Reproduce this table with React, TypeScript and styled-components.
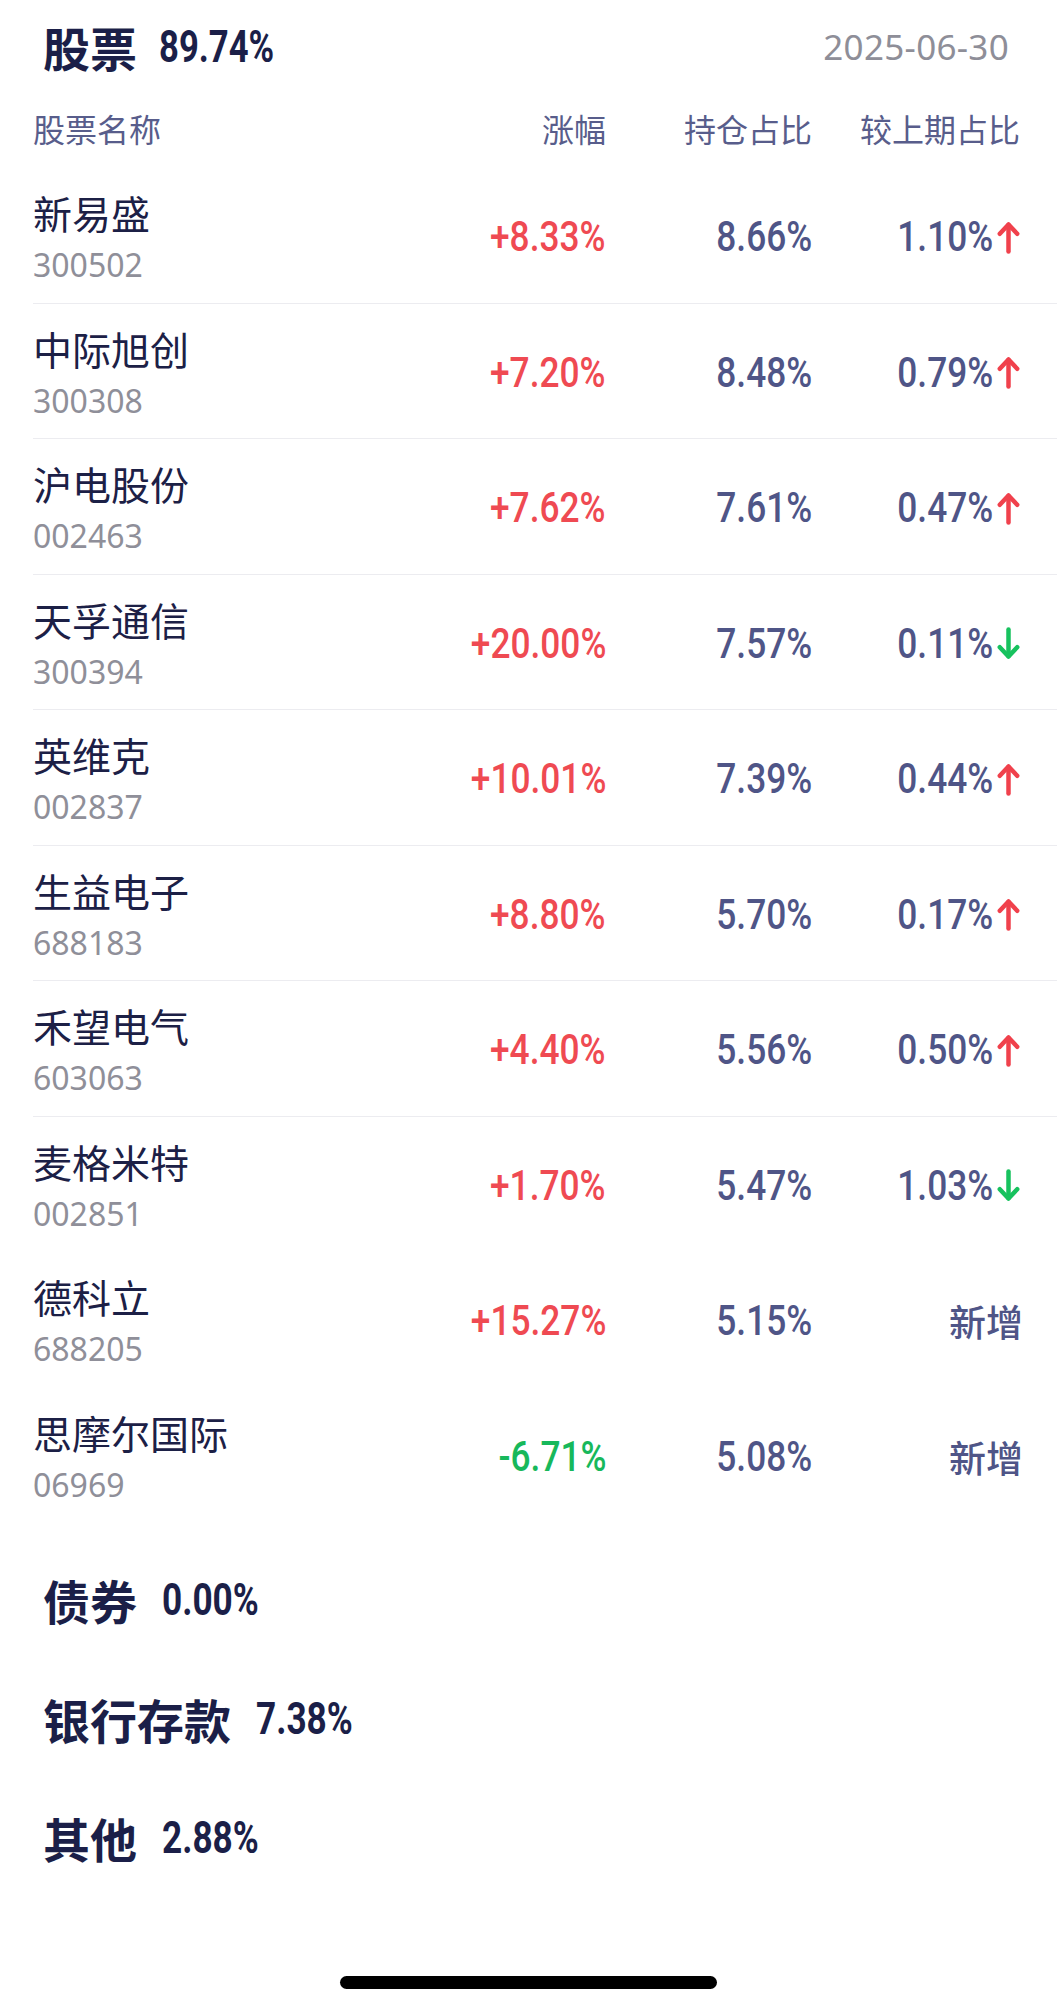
import React from "react";
import styled, { createGlobalStyle } from "styled-components";

type Trend = "up" | "down";

interface Holding {
  name: string;
  code: string;
  change: string;
  ratio: string;
  prev?: string;
  trend?: Trend;
  line?: boolean;
}

const holdings: Holding[] = [
  { name: "新易盛", code: "300502", change: "+8.33%", ratio: "8.66%", prev: "1.10%", trend: "up", line: true },
  { name: "中际旭创", code: "300308", change: "+7.20%", ratio: "8.48%", prev: "0.79%", trend: "up", line: true },
  { name: "沪电股份", code: "002463", change: "+7.62%", ratio: "7.61%", prev: "0.47%", trend: "up", line: true },
  { name: "天孚通信", code: "300394", change: "+20.00%", ratio: "7.57%", prev: "0.11%", trend: "down", line: true },
  { name: "英维克", code: "002837", change: "+10.01%", ratio: "7.39%", prev: "0.44%", trend: "up", line: true },
  { name: "生益电子", code: "688183", change: "+8.80%", ratio: "5.70%", prev: "0.17%", trend: "up", line: true },
  { name: "禾望电气", code: "603063", change: "+4.40%", ratio: "5.56%", prev: "0.50%", trend: "up", line: true },
  { name: "麦格米特", code: "002851", change: "+1.70%", ratio: "5.47%", prev: "1.03%", trend: "down" },
  { name: "德科立", code: "688205", change: "+15.27%", ratio: "5.15%" },
  { name: "思摩尔国际", code: "06969", change: "-6.71%", ratio: "5.08%" },
];

const others = [
  { label: "债券", value: "0.00%" },
  { label: "银行存款", value: "7.38%" },
  { label: "其他", value: "2.88%" },
];

const GlobalStyle = createGlobalStyle`
  html, body {
    margin: 0;
    padding: 0;
    background: #ffffff;
  }
  body {
    font-family: "Noto Sans CJK SC", "Noto Sans", sans-serif;
    -webkit-font-smoothing: antialiased;
  }
`;

const Page = styled.div`
  width: 1057px;
  min-height: 2011px;
  background: #fff;
  display: flex;
  flex-direction: column;
`;

const TitleBar = styled.div`
  height: 92px;
  display: flex;
  align-items: center;
  justify-content: space-between;
  padding: 0 48px 0 43px;
`;

const TitleGroup = styled.div<{ $gap?: number }>`
  display: flex;
  align-items: center;
  gap: ${(p) => p.$gap ?? 22}px;
`;

const BigLabel = styled.span`
  font-family: "Noto Sans CJK SC", sans-serif;
  font-size: 47px;
  font-weight: 700;
  color: #1b1f48;
  line-height: 1;
`;

// condensed look of the original digit face
const BigValue = styled.span<{ $size?: number; $squeeze?: number }>`
  display: inline-block;
  font-family: "Roboto", "Noto Sans", sans-serif;
  font-size: ${(p) => p.$size ?? 44}px;
  font-weight: 700;
  color: #1b1f48;
  line-height: 1;
  transform: scaleX(${(p) => p.$squeeze ?? 0.77});
  transform-origin: left center;
`;

const DateText = styled.span`
  font-family: "Noto Sans", "Roboto", sans-serif;
  font-size: 35px;
  color: #8e8e98;
  letter-spacing: 0.3px;
`;

const Columns = styled.div`
  display: grid;
  grid-template-columns: 1fr 200px 206px 208px;
  align-items: center;
`;

const HeadRow = styled(Columns)`
  height: 76px;
  box-sizing: border-box;
  padding: 0 37px 4px 33px;
`;

const HeadCell = styled.span<{ $right?: boolean }>`
  font-family: "Noto Sans CJK SC", sans-serif;
  font-size: 32px;
  color: #585d8b;
  text-align: ${(p) => (p.$right ? "right" : "left")};
`;

const List = styled.div`
  padding-left: 43px;
`;

const Row = styled(Columns)<{ $line?: boolean }>`
  height: 135.5px;
  box-sizing: border-box;
  margin-left: -10px;
  padding-right: 37px;
  border-bottom: 1px solid ${(p) => (p.$line ? "#ececf0" : "transparent")};
`;

const NameCell = styled.div`
  display: flex;
  flex-direction: column;
  padding-top: 3px;
`;

const Name = styled.span`
  font-family: "Noto Sans CJK SC", sans-serif;
  font-size: 39px;
  line-height: 50px;
  color: #1c2046;
`;

const Code = styled.span`
  font-family: "Noto Sans", "Roboto", sans-serif;
  font-size: 32px;
  line-height: 42px;
  color: #8f8f99;
  margin-top: 7px;
`;

const NumCell = styled.div`
  display: flex;
  align-items: center;
  justify-content: flex-end;
  gap: 4px;
  padding-top: 4px;
`;

const Num = styled.span<{ $tone: "red" | "green" | "plain" }>`
  display: inline-block;
  font-family: "Roboto", "Noto Sans", sans-serif;
  font-size: 42px;
  font-weight: 500;
  line-height: 1;
  transform: scaleX(0.84);
  transform-origin: right center;
  color: ${(p) =>
    p.$tone === "red" ? "#ef4a52" : p.$tone === "green" ? "#17b85b" : "#4f5587"};
`;

const NewTag = styled.span`
  font-family: "Noto Sans CJK SC", sans-serif;
  font-size: 37px;
  font-weight: 500;
  color: #4f5587;
  margin-right: -3px;
`;

const Sections = styled.div`
  margin-top: 17px;
`;

const Section = styled.div`
  height: 119px;
  display: flex;
  align-items: center;
  padding-left: 43px;
`;

const HomeBar = styled.div`
  width: 377px;
  height: 13px;
  border-radius: 7px;
  background: #000;
  margin: 79px auto 0;
`;

function Arrow({ dir }: { dir: Trend }) {
  const color = dir === "up" ? "#f0414c" : "#17c25e";
  return (
    <svg width="23" height="33" viewBox="0 0 23 33" fill="none">
      <g
        stroke={color}
        strokeWidth="4.5"
        strokeLinecap="round"
        strokeLinejoin="round"
        transform={dir === "down" ? "rotate(180 11.5 16.5)" : undefined}
      >
        <path d="M11.5 30.5V4" />
        <path d="M2.8 12.8L11.5 3.5L20.2 12.8" />
      </g>
    </svg>
  );
}

export default function App() {
  return (
    <Page>
      <GlobalStyle />
      <TitleBar>
        <TitleGroup>
          <BigLabel>股票</BigLabel>
          <BigValue $size={45}>89.74%</BigValue>
        </TitleGroup>
        <DateText>2025-06-30</DateText>
      </TitleBar>

      <HeadRow>
        <HeadCell>股票名称</HeadCell>
        <HeadCell $right>涨幅</HeadCell>
        <HeadCell $right>持仓占比</HeadCell>
        <HeadCell $right>较上期占比</HeadCell>
      </HeadRow>

      <List>
        {holdings.map((h) => (
          <Row key={h.code} $line={h.line}>
            <NameCell>
              <Name>{h.name}</Name>
              <Code>{h.code}</Code>
            </NameCell>
            <NumCell>
              <Num $tone={h.change.startsWith("-") ? "green" : "red"}>{h.change}</Num>
            </NumCell>
            <NumCell>
              <Num $tone="plain">{h.ratio}</Num>
            </NumCell>
            <NumCell>
              {h.prev && h.trend ? (
                <>
                  <Num $tone="plain">{h.prev}</Num>
                  <Arrow dir={h.trend} />
                </>
              ) : (
                <NewTag>新增</NewTag>
              )}
            </NumCell>
          </Row>
        ))}
      </List>

      <Sections>
        {others.map((o) => (
          <Section key={o.label}>
            <TitleGroup $gap={25}>
              <BigLabel>{o.label}</BigLabel>
              <BigValue $squeeze={0.8}>{o.value}</BigValue>
            </TitleGroup>
          </Section>
        ))}
      </Sections>

      <HomeBar />
    </Page>
  );
}
